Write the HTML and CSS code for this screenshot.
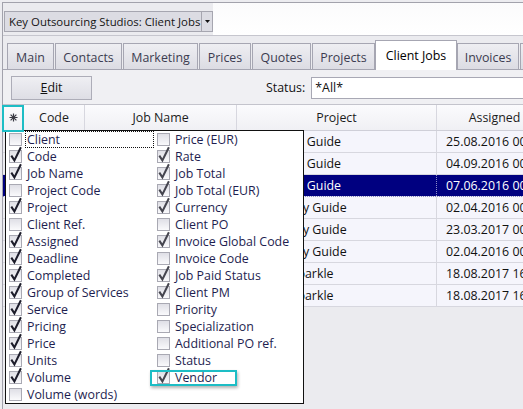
FILE: index.html
```html
<!DOCTYPE html>
<html lang="en">
<head>
<meta charset="utf-8">
<title>Key Outsourcing Studios: Client Jobs</title>
<link rel="stylesheet" href="styles.css">
</head>
<body>
<div class="window">
  <svg class="defs" aria-hidden="true">
    <defs>
      <linearGradient id="cbg" x1="0" y1="0" x2="0" y2="1">
        <stop offset="0" stop-color="#dedee5"/>
        <stop offset="1" stop-color="#fbfbfd"/>
      </linearGradient>
      <rect id="box" x=".5" y=".5" width="12" height="12" fill="url(#cbg)" stroke="#a9a9b3"/>
      <path id="tick" d="M2.3 5.6 L5.4 10.4 L11.9 -2.8" fill="none" stroke-width="2"/>
    </defs>
  </svg>

  <div class="topbar">
    <div class="combo-area">
      <div class="combo">
        <span class="combo-text">Key Outsourcing Studios: Client Jobs</span>
        <span class="combo-btn"><svg width="5" height="3" viewBox="0 0 5 3"><path d="M0 0H5L2.5 3Z" fill="#111"/></svg></span>
      </div>
    </div>
    <div class="topbar-fill"></div>
  </div>

  <div class="tabstrip">
    <div class="tab">Main</div>
    <div class="tab">Contacts</div>
    <div class="tab">Marketing</div>
    <div class="tab">Prices</div>
    <div class="tab">Quotes</div>
    <div class="tab">Projects</div>
    <div class="tab active">Client Jobs</div>
    <div class="tab">Invoices</div>
    <div class="tab tab-more"></div>
  </div>

  <div class="panel">
    <div class="toolbar">
      <div class="btn"><u>E</u>dit</div>
      <span class="status-label">Status:</span>
      <div class="input">*All*</div>
    </div>

    <div class="grid">
      <div class="row hdr">
        <div class="cell c0"><svg width="9" height="9" viewBox="-4.5 -4.5 9 9"><path d="M0-4V4M-4 0H4M-2.9-2.9L2.9 2.9M-2.9 2.9L2.9-2.9" stroke="#3a3a44" stroke-width="1.2"/></svg></div>
        <div class="cell c1">Code</div>
        <div class="cell c2">Job Name</div>
        <div class="cell c3">Project</div>
        <div class="cell c4">Assigned</div>
        <div class="cell c5"></div>
      </div>
      <div class="row data"><div class="cell c0"></div><div class="cell c1"></div><div class="cell c2"></div><div class="cell c3">Instruction Guide</div><div class="cell c4">25.08.2016 00:00</div><div class="cell c5"></div></div>
      <div class="row data"><div class="cell c0"></div><div class="cell c1"></div><div class="cell c2"></div><div class="cell c3">Instruction Guide</div><div class="cell c4">04.09.2016 00:00</div><div class="cell c5"></div></div>
      <div class="row data sel"><div class="cell c0"></div><div class="cell c1"></div><div class="cell c2"></div><div class="cell c3">Instruction Guide</div><div class="cell c4">07.06.2016 00:00</div><div class="cell c5"></div></div>
      <div class="row data"><div class="cell c0"></div><div class="cell c1"></div><div class="cell c2"></div><div class="cell c3">Typography Guide</div><div class="cell c4">02.04.2016 00:00</div><div class="cell c5"></div></div>
      <div class="row data"><div class="cell c0"></div><div class="cell c1"></div><div class="cell c2"></div><div class="cell c3">Typography Guide</div><div class="cell c4">23.03.2017 00:00</div><div class="cell c5"></div></div>
      <div class="row data"><div class="cell c0"></div><div class="cell c1"></div><div class="cell c2"></div><div class="cell c3">Typography Guide</div><div class="cell c4">02.04.2016 00:00</div><div class="cell c5"></div></div>
      <div class="row data"><div class="cell c0"></div><div class="cell c1"></div><div class="cell c2"></div><div class="cell c3">Website Sparkle</div><div class="cell c4">18.08.2017 16:00</div><div class="cell c5"></div></div>
      <div class="row data"><div class="cell c0"></div><div class="cell c1"></div><div class="cell c2"></div><div class="cell c3">Website Sparkle</div><div class="cell c4">18.08.2017 16:00</div><div class="cell c5"></div></div>
    </div>
  </div>

  <div class="popup">
    <div class="item focus"><svg class="cb" viewBox="0 0 13 13"><use href="#box"/></svg><span class="lbl">Client</span></div>
    <div class="item"><svg class="cb" viewBox="0 0 13 13"><use href="#box"/><use class="t" href="#tick"/></svg><span class="lbl">Code</span></div>
    <div class="item"><svg class="cb" viewBox="0 0 13 13"><use href="#box"/><use class="t" href="#tick"/></svg><span class="lbl">Job Name</span></div>
    <div class="item"><svg class="cb" viewBox="0 0 13 13"><use href="#box"/></svg><span class="lbl">Project Code</span></div>
    <div class="item"><svg class="cb" viewBox="0 0 13 13"><use href="#box"/><use class="t" href="#tick"/></svg><span class="lbl">Project</span></div>
    <div class="item"><svg class="cb" viewBox="0 0 13 13"><use href="#box"/></svg><span class="lbl">Client Ref.</span></div>
    <div class="item"><svg class="cb" viewBox="0 0 13 13"><use href="#box"/><use class="t" href="#tick"/></svg><span class="lbl">Assigned</span></div>
    <div class="item"><svg class="cb" viewBox="0 0 13 13"><use href="#box"/><use class="t" href="#tick"/></svg><span class="lbl">Deadline</span></div>
    <div class="item"><svg class="cb" viewBox="0 0 13 13"><use href="#box"/><use class="t" href="#tick"/></svg><span class="lbl">Completed</span></div>
    <div class="item"><svg class="cb" viewBox="0 0 13 13"><use href="#box"/><use class="t" href="#tick"/></svg><span class="lbl">Group of Services</span></div>
    <div class="item"><svg class="cb" viewBox="0 0 13 13"><use href="#box"/><use class="t" href="#tick"/></svg><span class="lbl">Service</span></div>
    <div class="item"><svg class="cb" viewBox="0 0 13 13"><use href="#box"/><use class="t" href="#tick"/></svg><span class="lbl">Pricing</span></div>
    <div class="item"><svg class="cb" viewBox="0 0 13 13"><use href="#box"/><use class="t" href="#tick"/></svg><span class="lbl">Price</span></div>
    <div class="item"><svg class="cb" viewBox="0 0 13 13"><use href="#box"/><use class="t" href="#tick"/></svg><span class="lbl">Units</span></div>
    <div class="item"><svg class="cb" viewBox="0 0 13 13"><use href="#box"/><use class="t" href="#tick"/></svg><span class="lbl">Volume</span></div>
    <div class="item"><svg class="cb" viewBox="0 0 13 13"><use href="#box"/></svg><span class="lbl">Volume (words)</span></div>

    <div class="item col2"><svg class="cb" viewBox="0 0 13 13"><use href="#box"/></svg><span class="lbl">Price (EUR)</span></div>
    <div class="item col2"><svg class="cb" viewBox="0 0 13 13"><use href="#box"/><use class="t" href="#tick"/></svg><span class="lbl">Rate</span></div>
    <div class="item col2"><svg class="cb" viewBox="0 0 13 13"><use href="#box"/><use class="t" href="#tick"/></svg><span class="lbl">Job Total</span></div>
    <div class="item col2"><svg class="cb" viewBox="0 0 13 13"><use href="#box"/><use class="t" href="#tick"/></svg><span class="lbl">Job Total (EUR)</span></div>
    <div class="item col2"><svg class="cb" viewBox="0 0 13 13"><use href="#box"/><use class="t" href="#tick"/></svg><span class="lbl">Currency</span></div>
    <div class="item col2"><svg class="cb" viewBox="0 0 13 13"><use href="#box"/></svg><span class="lbl">Client PO</span></div>
    <div class="item col2"><svg class="cb" viewBox="0 0 13 13"><use href="#box"/><use class="t" href="#tick"/></svg><span class="lbl">Invoice Global Code</span></div>
    <div class="item col2"><svg class="cb" viewBox="0 0 13 13"><use href="#box"/></svg><span class="lbl">Invoice Code</span></div>
    <div class="item col2"><svg class="cb" viewBox="0 0 13 13"><use href="#box"/><use class="t" href="#tick"/></svg><span class="lbl">Job Paid Status</span></div>
    <div class="item col2"><svg class="cb" viewBox="0 0 13 13"><use href="#box"/><use class="t" href="#tick"/></svg><span class="lbl">Client PM</span></div>
    <div class="item col2"><svg class="cb" viewBox="0 0 13 13"><use href="#box"/></svg><span class="lbl">Priority</span></div>
    <div class="item col2"><svg class="cb" viewBox="0 0 13 13"><use href="#box"/></svg><span class="lbl">Specialization</span></div>
    <div class="item col2"><svg class="cb" viewBox="0 0 13 13"><use href="#box"/></svg><span class="lbl">Additional PO ref.</span></div>
    <div class="item col2"><svg class="cb" viewBox="0 0 13 13"><use href="#box"/></svg><span class="lbl">Status</span></div>
    <div class="item col2"><svg class="cb" viewBox="0 0 13 13"><use href="#box"/><use class="t" href="#tick"/></svg><span class="lbl">Vendor</span></div>
  </div>

  <div class="hl hl-star"></div>
  <div class="hl hl-vendor"></div>
</div>
</body>
</html>
```

FILE: styles.css
```css
* { box-sizing: border-box; }

html, body {
  margin: 0;
  height: 100%;
}

body {
  background: #ececf0;
  overflow: hidden;
  font-family: "Open Sans", "Noto Sans", sans-serif;
  font-size: 12.4px;
  color: #111;
}

.defs {
  position: absolute;
  width: 0;
  height: 0;
}

.window {
  position: relative;
  margin: 2px 0 0 2px;
  width: 680px;
  height: 407px;
  border-top: 1px solid #a2a2ac;
  border-left: 1px solid #a2a2ac;
  background: #ebebef;
  display: flex;
  flex-direction: column;
}

/* top bar with combobox */
.topbar {
  display: flex;
  height: 33px;
  flex: none;
  border-bottom: 1px solid #c6c6ce;
}

.combo-area {
  background: #ebebef;
  padding: 8px 0 0 1px;
}

.combo {
  display: flex;
  height: 21px;
  border: 1px solid #a6a6b0;
  background: #dcdce3;
  font-size: 11.4px;
  color: #141414;
}

.combo-text {
  padding: 0 1px 0 4px;
  line-height: 19px;
  white-space: nowrap;
}

.combo-btn {
  width: 11px;
  border-left: 1px solid #a6a6b0;
  display: flex;
  align-items: center;
  justify-content: center;
}

.topbar-fill {
  flex: 1;
  background: linear-gradient(#fbfbfc, #ffffff);
}

/* tabs */
.tabstrip {
  display: flex;
  align-items: flex-end;
  height: 33px;
  flex: none;
  padding-left: 4px;
  gap: 1px;
}

.tab {
  flex: none;
  height: 26px;
  padding-top: 1px;
  border: 1px solid #a6a6b2;
  border-bottom: none;
  background: linear-gradient(#eeeef2, #dcdce3);
  color: #3c3c50;
  display: flex;
  align-items: center;
  justify-content: center;
  white-space: nowrap;
}

.tab:nth-child(1) { width: 47px; }
.tab:nth-child(2) { width: 67px; }
.tab:nth-child(3) { width: 75px; }
.tab:nth-child(4) { width: 52px; }
.tab:nth-child(5) { width: 59px; }
.tab:nth-child(6) { width: 63px; }
.tab:nth-child(7) { width: 82px; }
.tab:nth-child(8) { width: 62px; }
.tab:nth-child(9) { width: 70px; }

.tab.active {
  height: 30px;
  margin: 0 -1px -1px -1px;
  padding: 0 0 1px;
  background: #ffffff;
  color: #000;
  position: relative;
  z-index: 1;
}

/* panel */
.panel {
  flex: 1;
  display: flex;
  flex-direction: column;
  border-top: 1px solid #a6a6b2;
  background: #f0f0f3;
}

.toolbar {
  height: 34px;
  flex: none;
  display: flex;
  align-items: flex-start;
  padding: 6px 0 0 8px;
}

.btn {
  width: 81px;
  height: 24px;
  border: 1px solid #adadb8;
  background: linear-gradient(#efeff3, #dedee5);
  text-align: center;
  line-height: 22px;
  color: #111;
}

.status-label {
  margin-left: 174px;
  line-height: 23px;
  color: #111;
}

.input {
  margin: 1px 0 0 6px;
  width: 320px;
  height: 22px;
  border: 1px solid #a8a8b4;
  background: #fff;
  padding-left: 3px;
  line-height: 20px;
  color: #111;
}

/* grid */
.grid {
  flex: 1;
  border-top: 1px solid #c4c4cc;
  background: #ebebef;
}

.row {
  display: flex;
  height: 22px;
  border-bottom: 1px solid #d7d7df;
}

.cell {
  flex: none;
  border-right: 1px solid #d7d7df;
  overflow: hidden;
  white-space: nowrap;
  padding-left: 4px;
  line-height: 21px;
}

.c0 { width: 21px; padding: 0; }
.c1 { width: 61px; }
.c2 { width: 152px; }
.c3 { width: 200px; }
.c4 { width: 116px; padding-left: 9px; }
.c5 { width: 120px; }

.hdr {
  height: 26px;
  background: linear-gradient(#fbfbfd, #f0f0f4);
  border-bottom: 1px solid #cfcfd8;
}

.hdr .cell {
  text-align: center;
  padding: 0;
  line-height: 25px;
  color: #1c1c1c;
}

.hdr .c0 {
  display: flex;
  align-items: center;
  justify-content: center;
}

.data .cell { background: #f5f5fc; }
.data .c0 { background: #ebebf0; }

.sel { border-bottom: 1px dotted #8c8cc8; }
.sel .cell { background: #000080; color: #fff; border-right: 1px dotted #8c8cc8; }

/* column chooser popup */
.popup {
  position: absolute;
  left: 2px;
  top: 127px;
  width: 299px;
  height: 274px;
  background: #fff;
  border: 1px solid #111;
  display: grid;
  grid-template-rows: repeat(16, 17px);
  grid-template-columns: 148px 1fr;
  grid-auto-flow: column;
  padding-left: 3px;
  color: #1e1e50;
}

.item {
  display: flex;
  align-items: center;
  white-space: nowrap;
}

.cb {
  width: 13px;
  height: 13px;
  flex: none;
  overflow: visible;
}

.cb .t { stroke: #1c1c2a; }
.col2 .cb .t { stroke: #45454f; }

.lbl {
  flex: 1;
  margin: 0 3px 0 3px;
  padding-left: 2px;
  height: 17px;
  line-height: 17px;
}

.focus .lbl {
  outline: 1px dotted #111;
  outline-offset: -1px;
}

/* callout highlights */
.hl {
  position: absolute;
  border: 2px solid #1dbdc5;
}

.hl-star {
  left: -1px;
  top: 102px;
  width: 22px;
  height: 27px;
}

.hl-vendor {
  left: 147px;
  top: 367px;
  width: 87px;
  height: 16px;
  box-shadow: 1px 2px 3px rgba(0, 0, 0, 0.3);
}
```
